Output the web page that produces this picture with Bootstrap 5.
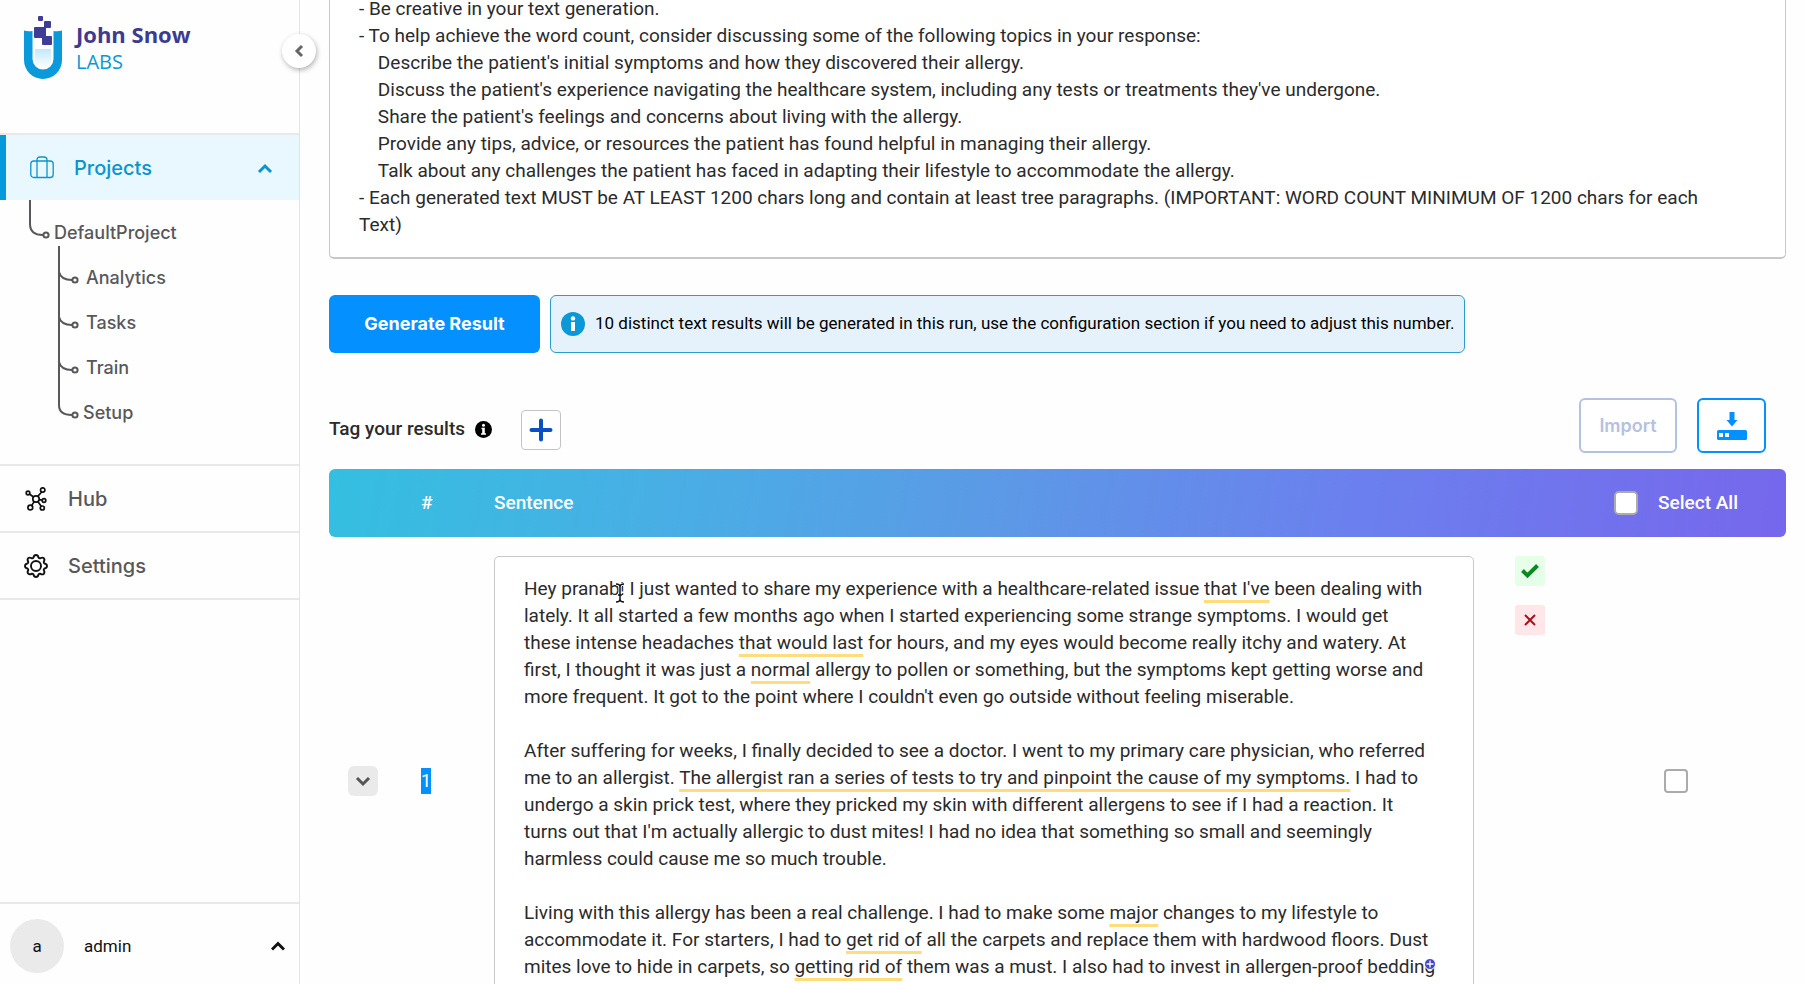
<!DOCTYPE html>
<html lang="en">
<head>
<meta charset="utf-8">
<meta name="viewport" content="width=device-width, initial-scale=1">
<title>John Snow Labs - Synthetic text</title>
<link href="https://cdn.jsdelivr.net/npm/bootstrap@5.3.0/dist/css/bootstrap.min.css" rel="stylesheet">
<style>
  body { font-family: Roboto, sans-serif; color: #2b2b2b; background: #fefefe; }
  .sidebar { width: 300px; border-right: 1px solid #e4e4e4; font-family: Inter, sans-serif; font-weight: 500; z-index: 1; }
  .brand { height: 133px; padding: 14px 0 0 24px; gap: 14px; }
  .brand-name { font: 700 22px/28px "Open Sans", sans-serif; color: #3d3a92; padding-top: 6px; }
  .brand-sub { font: 400 20px/28px "Open Sans", sans-serif; color: #0a98d6; }
  .collapse-btn { top: 34px; right: -17px; width: 34px; height: 34px; background: #fff; box-shadow: 1px 2px 5px rgba(0,0,0,.3); }
  .side-link { height: 65px; color: #58585a; font-size: 20px; }
  .side-link svg { flex: none; }
  .rule { border-top: 2px solid #e8e8e8; }
  .current { background: #e9f8ff; color: #0a94d0; border-left: 6px solid #059bdb; }
  .tree { padding: 10px 0 29px; }
  .tree a { height: 45px; font-size: 18px; color: #58585a; padding-left: 86px; }
  .tree a.root { padding-left: 54px; }
  .tree a.leaf-end { padding-left: 83px; }
  .tree-lines { left: 0; top: 0; }
  .account { height: 82px; font: 400 17px/24px Roboto, sans-serif; color: #111; padding: 3px 14px 0 10px; }
  .avatar { width: 54px; height: 54px; background: #eaeaea; }
  .scrolled { margin-top: -5px; padding: 0 18px 0 29px; }
  .field { border: 1px solid #c8c8c8; border-radius: 5px; background: #fff; color: #2b2b2b; font-size: 19px; line-height: 27px; }
  .prompt { height: 264px; border-top: 0; border-bottom-width: 2px; border-radius: 0 0 5px 5px; padding: 0 54px 18px 29px; resize: none; overflow: hidden; white-space: pre-wrap; }
  .actions { margin-top: 36px; gap: 10px; }
  .generate { width: 211px; height: 58px; border-radius: 6px; background: #0590ff; color: #fff; font: 700 18px/24px Inter, sans-serif; }
  .notice { height: 58px; border: 1px solid #2a9dcc; border-radius: 6px; background: #e5f2fb; color: #000; font-size: 17px; padding: 0 10px; gap: 10px; }
  .toolbar { margin-top: 45px; height: 55px; padding-right: 20px; }
  .tag-title { font-size: 19px; font-weight: 500; gap: 10px; padding-top: 8px; }
  .tag-title .add { margin-left: 19px; width: 40px; height: 40px; border: 1px solid #c4c4c4; border-radius: 4px; background: #fff; }
  .tool { height: 55px; border: 2px solid #0590ff; border-radius: 6px; background: #fff; font: 600 18px/24px Inter, sans-serif; }
  .import { width: 98px; border-color: #b5c1e1; color: #b5c1e1; }
  .export { width: 69px; }
  .results { margin-top: 16px; table-layout: fixed; width: 100%; border-spacing: 0; border-collapse: separate; }
  .results thead { background: linear-gradient(100deg, #34bfe0 0%, #4aade5 25%, #5b9ae6 45%, #6b80ee 70%, #7667ec 100%); clip-path: inset(0 round 6px); }
  .results th { height: 68px; font-size: 19px; font-weight: 500; color: #fff; padding: 0; }
  .results td { padding: 19px 0; }
  .c-toggle, .c-mark { width: 92px; }
  .c-num { width: 73px; }
  .c-pick { width: 220px; }
  .tick { width: 24px; height: 24px; margin: 0; border: 2px solid #ababab; border-radius: 5px; background: #fff; }
  .toggle { width: 30px; height: 30px; margin-left: 19px; border-radius: 6px; background: #eaeaea; }
  .row-no { background: #0590ff; color: #fff; font-size: 18px; line-height: 26px; }
  .sentence { height: 450px; padding: 18px 36px 0 29px; white-space: pre-wrap; overflow: hidden; }
  .hint { text-decoration: underline 3px #ffdc7c; text-underline-offset: 5px; text-decoration-skip-ink: none; }
  .verdict { width: 30px; height: 30px; border-radius: 3px; margin-left: 41px; }
  .accept { background: #e5ffe9; }
  .reject { background: #ffe6e8; margin-top: 19px; }
  .caret { left: 120px; top: 26px; }
  .assist { left: 930px; top: 402px; }
</style>
</head>
<body>
<div class="d-flex vh-100 overflow-hidden">
  <aside class="sidebar d-flex flex-column flex-shrink-0 position-relative">
    <div class="brand d-flex align-items-start">
      <svg width="38" height="66" viewBox="0 0 38 66" aria-hidden="true">
        <defs><linearGradient id="liq" x1="0" y1="0" x2="0" y2="1"><stop offset="0" stop-color="#bfe9fb"/><stop offset="1" stop-color="#fff"/></linearGradient></defs>
        <path d="M0 16.500q4 1.200 8.500.5V45a10.500 10.500 0 0 0 21 0V17q4.500.7 8.500-.5V46a19 19 0 0 1-38 0z" fill="#0a9adb"/>
        <path d="M11 35h16v11a8 8 0 0 1-16 0z" fill="url(#liq)"/>
        <g fill="#3f3d96"><rect x="14" y="2" width="5" height="5" rx="1"/><rect x="20" y="7" width="7" height="7" rx="1"/><rect x="10" y="13" width="12" height="11" rx="1"/><rect x="18" y="22" width="10" height="9" rx="1"/></g>
      </svg>
      <div><div class="brand-name">John Snow</div><div class="brand-sub">LABS</div></div>
    </div>
    <button type="button" class="collapse-btn btn p-0 border-0 rounded-circle position-absolute d-flex align-items-center justify-content-center" aria-label="Collapse menu">
      <svg width="10" height="14" viewBox="0 0 10 14"><path d="M8 2L3 7l5 5" fill="none" stroke="#666" stroke-width="3"/></svg>
    </button>
    <nav>
      <div class="rule">
        <a href="#" class="side-link current d-flex align-items-center text-decoration-none ps-4">
          <svg width="24" height="23" viewBox="0 0 24 23" fill="none" stroke="#0a94d0" stroke-width="1.3"><rect x=".8" y="5" width="22.4" height="16.5" rx="3"/><path d="M7 21V4q0-3 3-3h4q3 0 3 3v17"/></svg>
          <span class="ms-3 ps-1">Projects</span>
          <svg class="ms-auto me-4" width="20" height="12" viewBox="0 0 20 12"><path d="M4 10l6-6 6 6" fill="none" stroke="#0a94d0" stroke-width="3"/></svg>
        </a>
      </div>
      <div class="tree position-relative">
        <svg class="tree-lines position-absolute" width="84" height="230" viewBox="0 0 84 230" fill="none" stroke="#58585a" stroke-width="2" aria-hidden="true">
          <path d="M30 0v24q0 11 13 11M59 46v159q0 10 13 10M59 72q2 8 13 8M59 117q2 8 13 8M59 162q2 8 13 8"/>
          <circle cx="46" cy="35" r="2.6"/><circle cx="75" cy="80" r="2.6"/><circle cx="75" cy="125" r="2.6"/><circle cx="75" cy="170" r="2.6"/><circle cx="75" cy="215" r="2.6"/>
        </svg>
        <a href="#" class="root d-flex align-items-center text-decoration-none">DefaultProject</a>
        <a href="#" class="d-flex align-items-center text-decoration-none">Analytics</a>
        <a href="#" class="d-flex align-items-center text-decoration-none">Tasks</a>
        <a href="#" class="d-flex align-items-center text-decoration-none">Train</a>
        <a href="#" class="leaf-end d-flex align-items-center text-decoration-none">Setup</a>
      </div>
      <div class="rule">
        <a href="#" class="side-link d-flex align-items-center text-decoration-none ps-4">
          <svg width="24" height="24" viewBox="0 0 24 24" fill="none" stroke="#111" stroke-width="1.7"><circle cx="12" cy="12" r="3.2"/><circle cx="4" cy="6" r="1.8"/><circle cx="18.7" cy="3" r="2.2"/><circle cx="20" cy="13.5" r="1.8"/><circle cx="18.3" cy="21" r="2"/><circle cx="6.3" cy="20.5" r="2.4"/><path d="M9.500 10L5.500 7M13.700 9.300l4-4.300M15 12.600l3.200.6M13.800 14.600l3.400 4.700M10.200 14.600l-2.600 4"/></svg>
          <span class="ms-3 ps-1">Hub</span>
        </a>
      </div>
      <div class="rule">
        <a href="#" class="side-link d-flex align-items-center text-decoration-none ps-4">
          <svg width="24" height="24" viewBox="0 0 24 24" fill="none" stroke="#111" stroke-width="1.9" stroke-linejoin="round"><circle cx="12" cy="12" r="5"/><path d="M9.500 3.500Q10 1 12 1t2.500 2.500q.5 1 1.500.9Q18.500 3 19.800 4.200T19.700 8q0 1 .8 1.500Q23 10 23 12t-2.500 2.500q-.8.500-.8 1.500 1.400 2.500.1 3.800T16 19.600q-1 0-1.500.9Q14 23 12 23t-2.500-2.500q-.5-.9-1.500-.9-2.500 1.400-3.800.1T4.300 16q0-1-.8-1.500Q1 14 1 12t2.500-2.500Q4.300 9 4.300 8 2.900 5.500 4.200 4.200T8 4.400q1 .1 1.500-.9z"/></svg>
          <span class="ms-3 ps-1">Settings</span>
        </a>
      </div>
      <div class="rule"></div>
    </nav>
    <div class="account rule d-flex align-items-center mt-auto">
      <span class="avatar rounded-circle d-flex align-items-center justify-content-center me-3">a</span>
      <span class="ms-1">admin</span>
      <svg class="ms-auto" width="14" height="10" viewBox="0 0 14 10"><path d="M1 8.500l6-6 6 6" fill="none" stroke="#111" stroke-width="3"/></svg>
    </div>
  </aside>

  <main class="flex-grow-1 overflow-hidden">
    <div class="scrolled">
      <textarea class="field prompt d-block w-100" aria-label="Prompt" spellcheck="false">- Be creative in your text generation.
- To help achieve the word count, consider discussing some of the following topics in your response:
    Describe the patient's initial symptoms and how they discovered their allergy.
    Discuss the patient's experience navigating the healthcare system, including any tests or treatments they've undergone.
    Share the patient's feelings and concerns about living with the allergy.
    Provide any tips, advice, or resources the patient has found helpful in managing their allergy.
    Talk about any challenges the patient has faced in adapting their lifestyle to accommodate the allergy.
- Each generated text MUST be AT LEAST 1200 chars long and contain at least tree paragraphs. (IMPORTANT: WORD COUNT MINIMUM OF 1200 chars for each Text)</textarea>

      <div class="actions d-flex">
        <button type="button" class="generate btn border-0">Generate Result</button>
        <div class="notice d-flex align-items-center">
          <svg width="24" height="24" viewBox="0 0 24 24" aria-hidden="true"><circle cx="12" cy="12" r="12" fill="#0a98d8"/><path d="M10 10h4v9h-4z" fill="#fff"/><circle cx="12" cy="6.400" r="2.200" fill="#fff"/></svg>
          <span>10 distinct text results will be generated in this run, use the configuration section if you need to adjust this number.</span>
        </div>
      </div>

      <div class="toolbar d-flex align-items-center justify-content-between">
        <div class="tag-title d-flex align-items-center">
          <span>Tag your results</span>
          <svg width="17" height="17" viewBox="0 0 17 17" aria-hidden="true"><circle cx="8.500" cy="8.500" r="8.500" fill="#000"/><path d="M6.500 6.800h3.300v5.500h1.200v1.500h-5v-1.500h1.200V8.300h-.7z" fill="#fff"/><circle cx="8.500" cy="4.200" r="1.500" fill="#fff"/></svg>
          <button type="button" class="add btn p-0 d-flex align-items-center justify-content-center" aria-label="Add tag">
            <svg width="24" height="24" viewBox="0 0 24 24"><path d="M12 2.500v19M2.500 12h19" stroke="#0b4fc4" stroke-width="4" stroke-linecap="round"/></svg>
          </button>
        </div>
        <div class="d-flex">
          <button type="button" class="tool import btn p-0 me-3">Import</button>
          <button type="button" class="tool export btn p-0 ms-1 d-flex align-items-center justify-content-center" aria-label="Export">
            <svg width="30" height="28" viewBox="0 0 30 28"><path d="M12.500 0h5v8h3L15 14.500 9.500 8h3z" fill="#0590ff"/><rect x="0" y="18" width="30" height="10" rx="1.500" fill="#0590ff"/><path d="M2 21h4v4H2zM8 21h4v4H8z" fill="#fff"/></svg>
          </button>
        </div>
      </div>

      <table class="results">
        <colgroup><col class="c-toggle"><col class="c-num"><col><col class="c-mark"><col class="c-pick"></colgroup>
        <thead>
          <tr>
            <th></th><th scope="col">#</th><th scope="col">Sentence</th><th></th>
            <th scope="col">
              <div class="d-flex align-items-center justify-content-center">
                <input type="checkbox" class="tick form-check-input" id="all">
                <label class="ms-3 ps-1" for="all">Select All</label>
              </div>
            </th>
          </tr>
        </thead>
        <tbody>
          <tr>
            <td class="align-middle">
              <button type="button" class="toggle btn p-0 border-0 d-flex align-items-center justify-content-center" aria-label="Expand row">
                <svg width="16" height="11" viewBox="0 0 16 11"><path d="M2 2l6 6 6-6" fill="none" stroke="#555" stroke-width="3"/></svg>
              </button>
            </td>
            <td class="align-middle"><span class="row-no d-inline-block">1</span></td>
            <td>
              <div class="position-relative">
                <div class="field sentence" role="textbox" aria-multiline="true" aria-label="Sentence" contenteditable="true" spellcheck="false">Hey pranab! I just wanted to share my experience with a healthcare-related issue <span class="hint">that I've</span> been dealing with lately. It all started a few months ago when I started experiencing some strange symptoms. I would get these intense headaches <span class="hint">that would last</span> for hours, and my eyes would become really itchy and watery. At first, I thought it was just a <span class="hint">normal</span> allergy to pollen or something, but the symptoms kept getting worse and more frequent. It got to the point where I couldn't even go outside without feeling miserable.

After suffering for weeks, I finally decided to see a doctor. I went to my primary care physician, who referred me to an allergist. <span class="hint">The allergist ran a series of tests to try and pinpoint the cause of my symptoms.</span> I had to undergo a skin prick test, where they pricked my skin with different allergens to see if I had a reaction. It turns out that I'm actually allergic to dust mites! I had no idea that something so small and seemingly harmless could cause me so much trouble.

Living with this allergy has been a real challenge. I had to make some <span class="hint">major</span> changes to my lifestyle to accommodate it. For starters, I had to <span class="hint">get rid of</span> all the carpets and replace them with hardwood floors. Dust mites love to hide in carpets, so <span class="hint">getting rid of</span> them was a must. I also had to invest in allergen-proof bedding</div>
                <svg class="caret position-absolute" width="12" height="22" viewBox="0 0 12 22" aria-hidden="true"><path d="M2 2q4 0 4 3 0-3 4-3M6 5v12M2 20q4 0 4-3 0 3 4 3M4 13h4" fill="none" stroke="#fff" stroke-width="3"/><path d="M2 2q4 0 4 3 0-3 4-3M6 5v12M2 20q4 0 4-3 0 3 4 3M4 13h4" fill="none" stroke="#111" stroke-width="1.500"/></svg>
                <svg class="assist position-absolute" width="12" height="12" viewBox="0 0 12 12" aria-hidden="true"><circle cx="6" cy="6" r="5.500" fill="#4343c4" stroke="#fff"/><path d="M6 2.500v7M2.500 6h7" stroke="#fff" stroke-width="1.300"/></svg>
              </div>
            </td>
            <td class="align-top">
              <button type="button" class="verdict accept btn p-0 border-0 d-flex align-items-center justify-content-center" aria-label="Accept">
                <svg width="18" height="16" viewBox="0 0 18 16"><path d="M1.500 7.500l5 5L16.500 2.500" fill="none" stroke="#0b8a22" stroke-width="4"/></svg>
              </button>
              <button type="button" class="verdict reject btn p-0 border-0 d-flex align-items-center justify-content-center" aria-label="Reject">
                <svg width="12" height="12" viewBox="0 0 12 12"><path d="M1 1l10 10M11 1L1 11" stroke="#a80f1a" stroke-width="2"/></svg>
              </button>
            </td>
            <td class="align-middle">
              <div class="d-flex justify-content-center"><input type="checkbox" class="tick form-check-input" aria-label="Select row 1"></div>
            </td>
          </tr>
        </tbody>
      </table>
    </div>
  </main>
</div>
<script src="https://cdn.jsdelivr.net/npm/bootstrap@5.3.0/dist/js/bootstrap.bundle.min.js"></script>
</body>
</html>
